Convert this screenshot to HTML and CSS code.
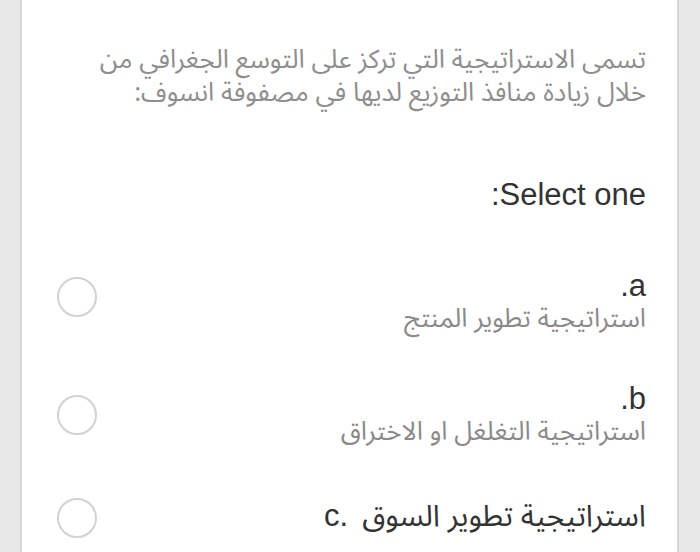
FILE: index.html
```html
<!DOCTYPE html>
<html lang="ar">
<head>
<meta charset="utf-8">
<link rel="stylesheet" href="styles.css">
</head>
<body>
<div class="card" dir="rtl">
  <p class="question">تسمى الاستراتيجية التي تركز على التوسع الجغرافي من خلال زيادة منافذ التوزيع لديها في مصفوفة انسوف:</p>
  <p class="prompt">Select one:</p>
  <div class="options">
    <div class="option option-a">
      <div class="label">
        <div class="letter">a.</div>
        <div class="answer">استراتيجية تطوير المنتج</div>
      </div>
      <span class="radio"></span>
    </div>
    <div class="option">
      <div class="label">
        <div class="letter">b.</div>
        <div class="answer">استراتيجية التغلغل او الاختراق</div>
      </div>
      <span class="radio"></span>
    </div>
    <div class="option option-c">
      <div class="label">
        <div class="inline"><bdi dir="ltr" class="letter-c">c.</bdi><bdi dir="rtl" class="answer-dark">استراتيجية تطوير السوق</bdi></div>
      </div>
      <span class="radio"></span>
    </div>
  </div>
</div>
</body>
</html>
```
FILE: styles.css
```css
html, body {
  margin: 0;
  padding: 0;
}
body {
  background: #e8e8e8;
  width: 700px;
  height: 552px;
  overflow: hidden;
  font-family: "Liberation Sans", Arial, sans-serif;
}
.card {
  margin-left: 20px;
  width: 655px;
  height: 552px;
  background: #fff;
  border-left: 2px solid #d6d6d6;
  border-right: 2px solid #d6d6d6;
  overflow: hidden;
}
.question {
  margin: 0;
  padding: 43px 31px 0 60px;
  font-family: "Noto Sans Arabic", "DejaVu Sans", sans-serif;
  font-size: 26px;
  line-height: 33px;
  color: #8e8e8e;
}
.prompt {
  margin: 0;
  padding: 68px 31px 0 0;
  font-size: 31px;
  line-height: 36px;
  color: #333;
}
.options {
  display: flex;
  flex-direction: column;
  gap: 47px;
  padding: 56px 31px 0 35px;
}
.option {
  display: flex;
  justify-content: space-between;
  align-items: center;
}
.letter {
  font-size: 31px;
  line-height: 34px;
  color: #333;
}
.answer {
  font-family: "Noto Sans Arabic", "DejaVu Sans", sans-serif;
  font-size: 26px;
  line-height: 32px;
  color: #8a8a8a;
}
.inline {
  display: flex;
  flex-direction: row-reverse;
  align-items: baseline;
  gap: 14px;
  font-size: 31px;
  line-height: 36px;
  color: #333;
}
.answer-dark {
  font-family: "Noto Sans Arabic", "DejaVu Sans", sans-serif;
  font-size: 30px;
}
.radio {
  width: 36px;
  height: 36px;
  border: 2px solid #d2d2d2;
  border-radius: 50%;
  flex: none;
}
.option-a .radio {
  margin-bottom: 10px;
}
.option-c .radio {
  margin-top: 3px;
}
```
